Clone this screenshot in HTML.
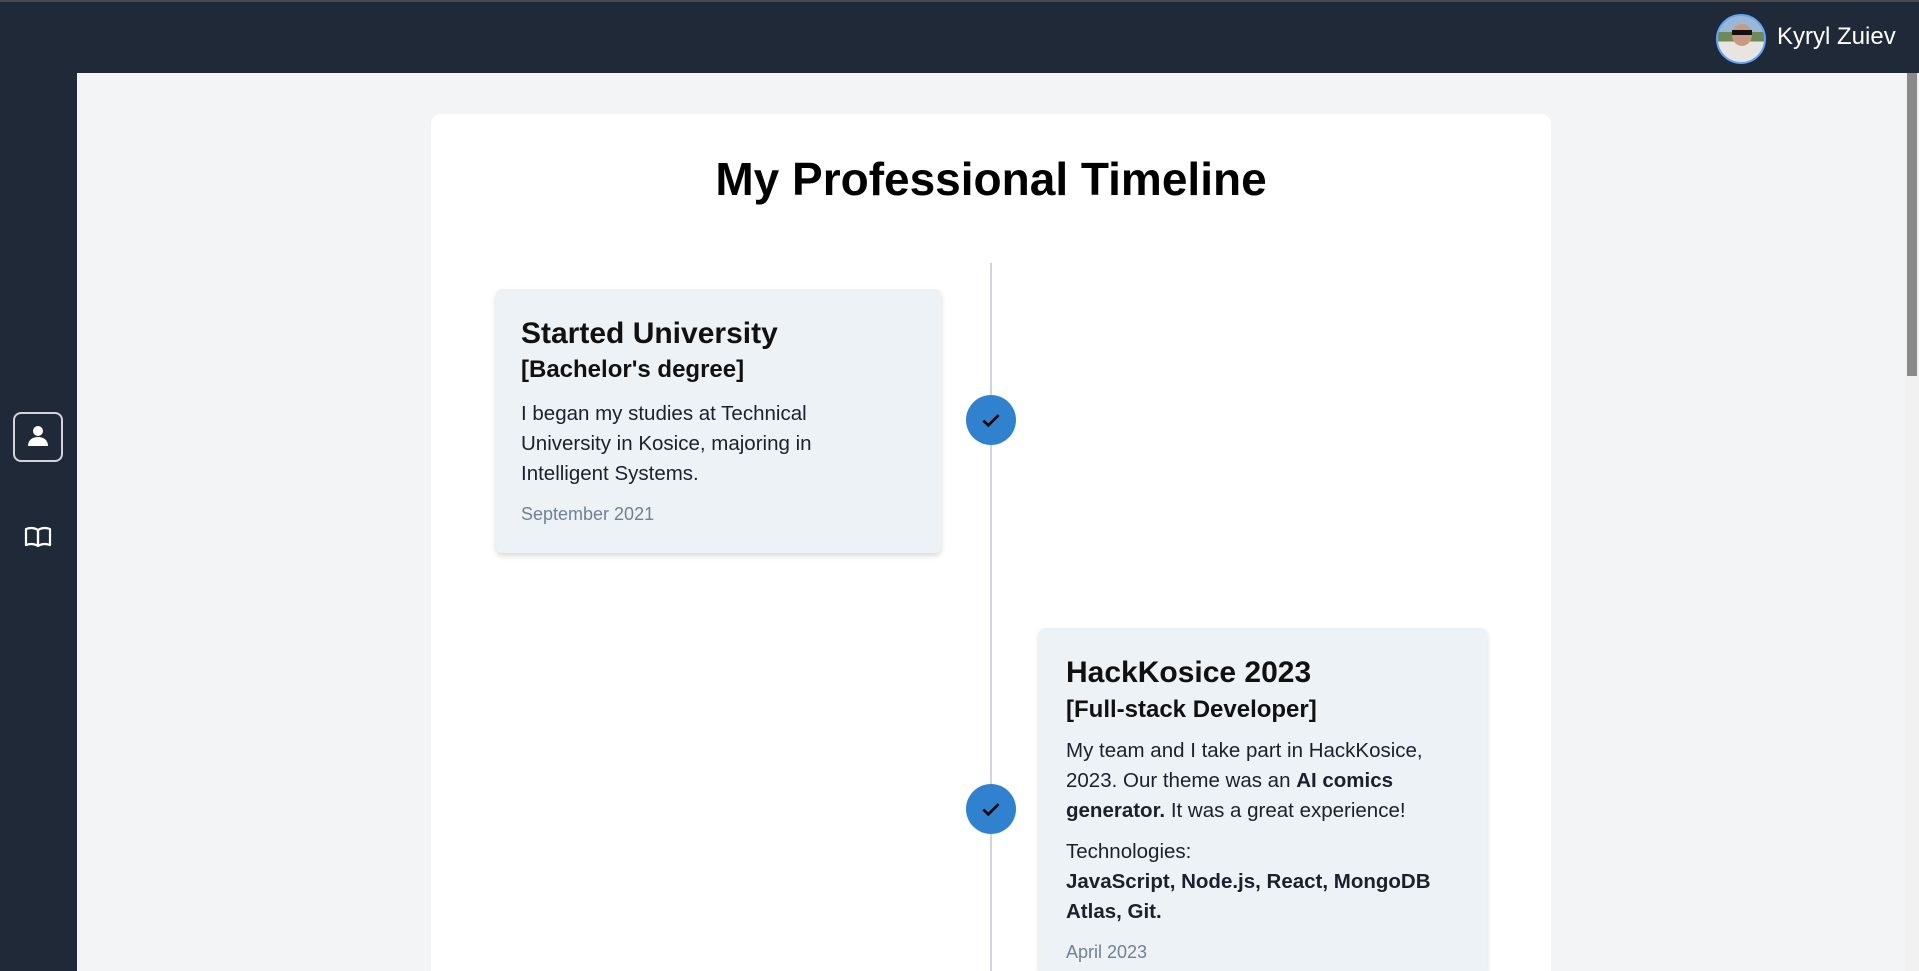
<!DOCTYPE html>
<html style="width:1919px;height:971px;overflow:hidden"><head><meta charset="utf-8"><style>
*{margin:0;padding:0;box-sizing:border-box}
body{width:1919px;height:971px;overflow:hidden;background:#f3f4f6;font-family:"Liberation Sans",sans-serif;position:relative;color:#111}
.hdr{position:absolute;left:0;top:0;width:1919px;height:73px;background:#1f2937;border-top:2px solid #4b4b4b;z-index:2}
.side{position:absolute;left:0;top:0;width:77px;height:971px;background:#1f2937}
.sb{position:absolute;left:1905px;top:73px;width:14px;height:898px;background:#f1f1f1;z-index:3}
.sb div{position:absolute;left:2px;top:0;width:10px;height:303px;background:#8a8a8a}
.clip{position:absolute;left:0;top:0;width:1919px;height:971px;overflow:hidden}
.main{position:absolute;left:431px;top:114px;width:1120px;height:857px;background:#fff;border-radius:10px 10px 0 0}
h1{position:absolute;left:431px;width:1120px;top:151px;text-align:center;font-size:46px;line-height:56px;font-weight:700;color:#000}
.line{position:absolute;left:990px;top:263px;width:2px;height:708px;background:#d1d5db}
.dot{position:absolute;width:50px;height:50px;border-radius:50%;background:#3182ce;left:966px}
.dot svg{position:absolute;left:12px;top:12px}
.card{position:absolute;background:#edf2f7;border-radius:6px;box-shadow:0 3px 6px rgba(0,0,0,.15)}
.t{position:absolute;white-space:nowrap}
.ti{font-size:30px;line-height:36px;font-weight:600}
.su{font-size:24px;line-height:30px;font-weight:700}
.bo{font-size:20.5px;line-height:30px;color:#1a202c}
.da{font-size:18px;line-height:24px;color:#718096}
</style></head><body><div class="clip">
<div class="side">
<div style="position:absolute;left:13px;top:412px;width:50px;height:50px;border:2px solid #d1d5db;border-radius:8px">
<svg width="46" height="46" viewBox="0 0 46 46" style="position:absolute;left:0;top:0"><circle cx="23" cy="17" r="5" fill="#fff"/><path d="M13 32c0-6 4.5-9 10-9s10 3 10 9z" fill="#fff"/></svg>
</div>
<svg width="28" height="22" viewBox="0 0 28 22" style="position:absolute;left:24px;top:526px" fill="none" stroke="#fff" stroke-width="2.2" stroke-linejoin="round"><path d="M2 3c4-1.5 8-1.5 12 1v16c-4-2.5-8-2.5-12-1z"/><path d="M26 3c-4-1.5-8-1.5-12 1v16c4-2.5 8-2.5 12-1z"/></svg>
</div>
<div class="hdr">
<div style="position:absolute;left:1716px;top:12px;width:50px;height:50px;border-radius:50%;border:2px solid #60a5fa;background:linear-gradient(#9ab8d6 0 35%,#6f8a5a 35% 55%,#e8e4e0 55%);overflow:hidden">
<div style="position:absolute;left:14px;top:8px;width:20px;height:22px;border-radius:50%;background:#c99a82"></div>
<div style="position:absolute;left:14px;top:14px;width:20px;height:5px;background:#111"></div>
</div>
<div style="position:absolute;left:1777px;top:20px;color:#fff;font-size:24px;line-height:30px">Kyryl Zuiev</div>
</div>
<div class="sb"><div></div></div>
<div class="main"></div>
<h1>My Professional Timeline</h1>
<div class="line"></div>
<div class="card" style="left:496px;top:289px;width:445px;height:264px"></div>
<div class="t ti" style="left:521px;top:316px">Started University</div>
<div class="t su" style="left:521px;top:355px">[Bachelor's degree]</div>
<div class="t bo" style="left:521px;top:399px">I began my studies at Technical<br>University in Kosice, majoring in<br>Intelligent Systems.</div>
<div class="t da" style="left:521px;top:502px">September 2021</div>
<div class="dot" style="top:395px"><svg width="26" height="26" viewBox="0 0 24 24" fill="none" stroke="#000" stroke-width="2.4"><path d="M5 12.5l4.5 4.5L19 7.5"/></svg></div>
<div class="card" style="left:1039px;top:628px;width:448px;height:343px;border-radius:6px 6px 0 0"></div>
<div class="t ti" style="left:1066px;top:655px">HackKosice 2023</div>
<div class="t su" style="left:1066px;top:695px">[Full-stack Developer]</div>
<div class="t bo" style="left:1066px;top:736px">My team and I take part in HackKosice,<br>2023. Our theme was an <b>AI comics</b><br><b>generator.</b> It was a great experience!</div>
<div class="t bo" style="left:1066px;top:837px">Technologies:<br><b>JavaScript, Node.js, React, MongoDB</b><br><b>Atlas, Git.</b></div>
<div class="t da" style="left:1066px;top:940px">April 2023</div>
<div class="dot" style="top:784px"><svg width="26" height="26" viewBox="0 0 24 24" fill="none" stroke="#000" stroke-width="2.4"><path d="M5 12.5l4.5 4.5L19 7.5"/></svg></div>
</div></body></html>
